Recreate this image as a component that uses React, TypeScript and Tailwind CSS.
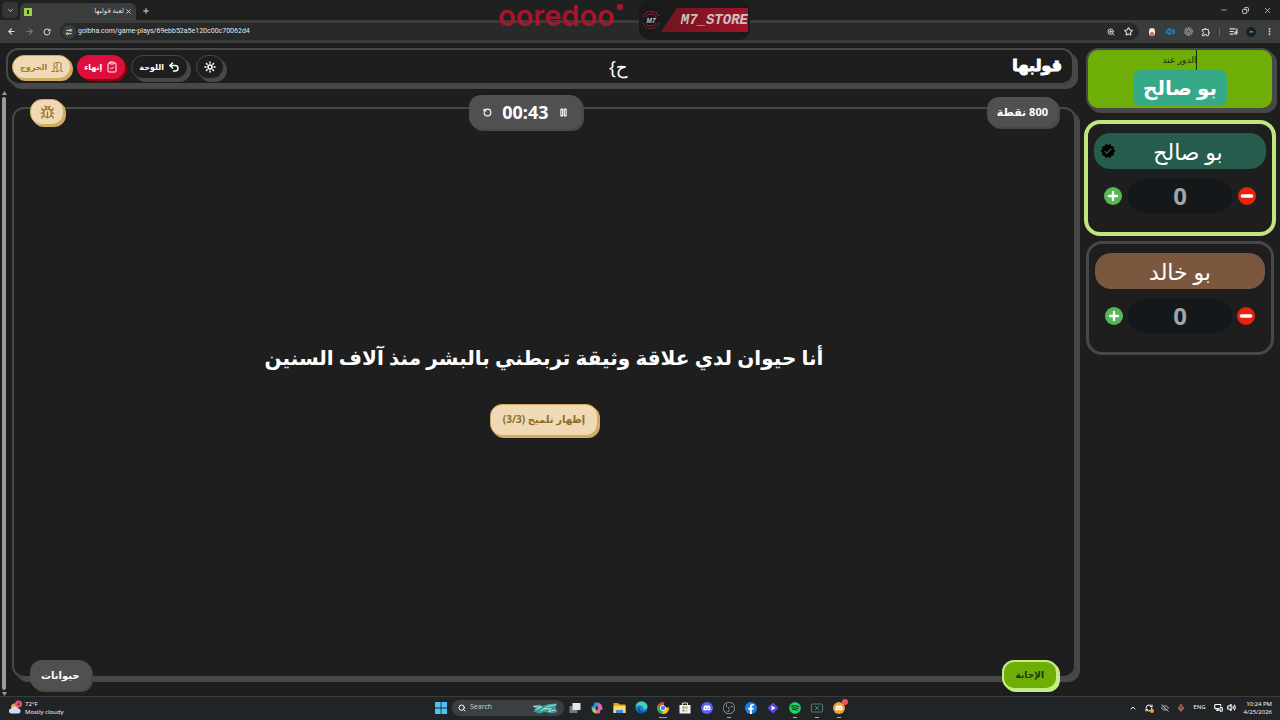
import type { ReactNode } from "react";
import {
  ArrowLeft,
  ArrowRight,
  Aperture,
  Bug,
  ChevronDown,
  ChevronUp,
  ClipboardCheck,
  Copy,
  EllipsisVertical,
  EyeOff,
  ListMusic,
  Mic,
  Minus,
  MonitorSmartphone,
  Pause,
  Plus,
  RefreshCw,
  RotateCcw,
  RotateCw,
  Search,
  Settings2,
  Star,
  Sun,
  Undo2,
  Volume2,
  X,
  ZoomIn,
} from "lucide-react";
import { FaDiscord, FaFacebookF, FaSpotify } from "react-icons/fa";
import { SiObsstudio } from "react-icons/si";
import { MdOutlineExtension, MdVerified } from "react-icons/md";

interface Team {
  name: string;
  score: number;
  active: boolean;
  color: string;
}

const TEAMS: Team[] = [
  { name: "بو صالح", score: 0, active: true, color: "bg-[#265c4d]" },
  { name: "بو خالد", score: 0, active: false, color: "bg-[#7b573f]" },
];

function IconButton({ label, className = "", children }: { label: string; className?: string; children: ReactNode }) {
  return (
    <button aria-label={label} className={`flex items-center justify-center shrink-0 ${className}`}>
      {children}
    </button>
  );
}

function DoorIcon() {
  return (
    <svg width="12" height="12" viewBox="0 0 24 24" fill="none" stroke="currentColor" strokeWidth="2" strokeLinecap="round" strokeLinejoin="round">
      <path d="M1 21h5M6 21V6a3 3 0 0 1 3-3h8a3 3 0 0 1 3 3v15h3M12 3v18l5-2M12 21h-2M9 12v1" />
    </svg>
  );
}

function BrowserChrome() {
  return (
    <header className="text-[#dcdcdc]">
      <div className="flex items-end h-5 bg-[#1f2121]">
        <IconButton label="Search tabs" className="w-4 h-4 ml-0.5 mb-0.5 rounded bg-[#343636]">
          <ChevronDown size={7} strokeWidth={3} />
        </IconButton>
        <div className="flex items-center w-29 h-[17px] ml-0.5 px-1 rounded-t-md bg-[#3b3c3c]">
          <span className="flex items-center justify-center w-2 h-2 bg-[#9bd43c]">
            <span className="w-0.5 h-1 bg-[#27400a]" />
          </span>
          <span dir="rtl" className="flex-1 pl-2 text-[7px] truncate">لعبة قولبها</span>
          <IconButton label="Close tab" className="w-2">
            <X size={7} strokeWidth={3} />
          </IconButton>
        </div>
        <IconButton label="New tab" className="w-4 h-[18px] ml-0.5">
          <Plus size={8} strokeWidth={3} />
        </IconButton>
        <div className="flex items-center gap-3.5 h-full ml-auto pr-2">
          <IconButton label="Minimize"><Minus size={8} /></IconButton>
          <IconButton label="Restore"><Copy size={7} strokeWidth={3} className="-scale-x-100" /></IconButton>
          <IconButton label="Close window"><X size={9} /></IconButton>
        </div>
      </div>
      <div className="flex items-center h-[23px] pl-1.5 pr-1.5 bg-[#3b3c3c]">
        <div className="flex items-center gap-2">
          <IconButton label="Back" className="w-2.5"><ArrowLeft size={9} strokeWidth={3} /></IconButton>
          <IconButton label="Forward" className="w-2.5 text-[#777]"><ArrowRight size={9} strokeWidth={3} /></IconButton>
          <IconButton label="Reload" className="w-2.5"><RotateCw size={8} strokeWidth={3} /></IconButton>
        </div>
        <div className="flex flex-1 items-center h-[17px] ml-2 pl-0.5 pr-1.5 rounded-full bg-[#282929]">
          <span className="flex items-center justify-center w-3.5 h-3.5 rounded-full bg-[#3b3c3c]">
            <Settings2 size={8} strokeWidth={3} className="-scale-x-100" />
          </span>
          <input
            aria-label="Address"
            className="flex-1 min-w-0 px-0.5 font-['Roboto'] text-[7px] text-[#e6e6e6] bg-transparent outline-none"
            defaultValue="golbha.com/game-plays/69ebb52a5e120c00c70062d4"
          />
          <div className="flex items-center gap-2">
            <IconButton label="Zoom" className="w-2"><ZoomIn size={8} strokeWidth={3} /></IconButton>
            <IconButton label="Bookmark" className="w-2.5"><Star size={9} strokeWidth={3} /></IconButton>
          </div>
        </div>
        <div className="flex items-center gap-2 ml-2">
          <IconButton label="Blocker" className="w-2.5">
            <span className="flex items-end justify-center w-1.5 h-2 rounded-sm bg-[#f3e5dc]">
              <span className="w-1 h-1 rounded-full bg-[#dc6a38]" />
            </span>
          </IconButton>
          <IconButton label="Sound" className="w-2.5 text-[#1c8fe6]"><Volume2 size={9} strokeWidth={3} /></IconButton>
          <IconButton label="Capture" className="w-2.5 text-[#aaa]"><Aperture size={9} /></IconButton>
          <IconButton label="Extensions" className="w-2.5">
            <MdOutlineExtension size={10} />
          </IconButton>
          <span className="w-px h-2 bg-[#666]" />
          <IconButton label="Media" className="w-2.5"><ListMusic size={9} strokeWidth={3} /></IconButton>
          <IconButton label="Profile" className="w-2.5 h-2.5 rounded-full bg-[#12202b] text-[4px]">m</IconButton>
          <IconButton label="Menu" className="w-2.5"><EllipsisVertical size={9} strokeWidth={3} /></IconButton>
        </div>
      </div>
    </header>
  );
}

function Sponsors() {
  return (
    <div className="absolute inset-x-0 top-0 flex justify-center gap-4 pr-8 pointer-events-none">
      <div className="flex gap-0.5 text-[#a9142b]">
        <span className="font-['Inter'] text-[29px] leading-8 font-semibold">ooredoo</span>
        <span className="w-1.5 h-1.5 mt-1 rounded-xs bg-[#a9142b]" />
      </div>
      <div className="flex items-center h-10 px-0.5 rounded-xl bg-[#191a1a]">
        <svg width="20" height="20" viewBox="0 0 40 40">
          <circle cx="20" cy="20" r="17" fill="#1c1113" stroke="#8f2434" strokeWidth="3" strokeDasharray="3 2" />
          <circle cx="20" cy="20" r="12" fill="none" stroke="#a52438" strokeWidth="2" />
          <rect x="2" y="14" width="36" height="12" fill="#191a1a" />
          <text x="20" y="25" textAnchor="middle" fill="#c4bcbc" fontSize="13" fontStyle="italic" fontWeight="700" fontFamily="Liberation Sans">M7</text>
        </svg>
        <span className="pl-5 text-sm leading-6 font-bold italic font-['Liberation_Mono'] text-[#c9c4c4] bg-linear-to-r from-[#6d1420] to-[#a31327] [clip-path:polygon(16px_0,100%_0,100%_100%,0_100%)]">
          M7_STORE
        </span>
      </div>
    </div>
  );
}

function TopBar() {
  return (
    <div className="flex items-center justify-between h-[37px] mx-1.5 px-1 border-2 border-[#484848] rounded-xl shadow-[4px_4px_0_#484848]">
      <div className="flex items-center gap-1.5 text-[8px] font-bold text-white">
        <button className="flex items-center gap-1 h-6 px-[7px] rounded-xl border border-[#d0ab62] bg-[#f0d9b5] text-[#a37a2c] shadow-[2px_2px_0_#d0ab62]">
          <span>الخروج</span>
          <DoorIcon />
        </button>
        <button className="flex items-center gap-1 h-6 px-[7px] rounded-xl bg-[#df0f3d] shadow-[2px_2px_0_#8d0008]">
          <span>إنهاء</span>
          <ClipboardCheck size={12} />
        </button>
        <button className="flex items-center gap-1 h-6 px-[7px] rounded-xl border border-[#484848] bg-[#1e1e1e] shadow-[3px_3px_0_#484848]">
          <span>اللوحة</span>
          <Undo2 size={12} strokeWidth={3} />
        </button>
        <IconButton label="الوضع" className="w-7 h-6 ml-0.5 rounded-xl border border-[#484848] bg-[#1e1e1e] shadow-[3px_3px_0_#484848]">
          <Sun size={12} strokeWidth={3} />
        </IconButton>
      </div>
      <span dir="rtl" className="text-lg text-white">ح{"}"}</span>
      <a href="#" className="pr-1.5 pb-1 text-base font-black text-white [-webkit-text-stroke:1px_white]">قولبها</a>
    </div>
  );
}

function Board() {
  return (
    <main className="relative flex flex-col flex-1 items-center justify-center mx-1 mt-[18px] mb-[18px] pb-2.5 border-2 border-[#484848] rounded-xl shadow-[4px_4px_0_#484848]">
      <div className="absolute inset-x-4 -top-3.5 flex items-center justify-between">
        <IconButton label="بلاغ" className="w-[34px] h-6.5 rounded-xl border border-[#d0ab62] bg-[#f0d9b5] text-[#9a7428] shadow-[2px_2px_0_#d0ab62]">
          <Bug size={15} />
        </IconButton>
        <div className="flex items-center gap-2.5 h-[34px] px-3.5 rounded-xl bg-[#505050] text-white shadow-[2px_2px_0_#484848]">
          <IconButton label="إعادة"><RotateCcw size={9} strokeWidth={3} /></IconButton>
          <span className="text-lg font-bold">00:43</span>
          <IconButton label="إيقاف"><Pause size={9} strokeWidth={3} /></IconButton>
        </div>
        <span dir="rtl" className="px-2.5 rounded-xl bg-[#505050] text-[11px] leading-[30px] font-bold text-white shadow-[2px_2px_0_#484848]">800 نقطة</span>
      </div>
      <h1 dir="rtl" className="text-xl leading-9 font-bold text-white">أنا حيوان لدي علاقة وثيقة تربطني بالبشر منذ آلاف السنين</h1>
      <button dir="rtl" className="h-8 mt-7 px-3 rounded-xl border border-[#d0ab62] bg-[#f0d9b5] text-[10px] font-bold text-[#8f6d25] shadow-[2px_2px_0_#d0ab62]">
        إظهار تلميح (3/3)
      </button>
      <div className="absolute inset-x-4 -bottom-3.5 flex items-center justify-between">
        <span className="px-[11px] rounded-xl bg-[#505050] text-[10px] leading-[30px] font-bold text-white shadow-[2px_2px_0_#484848]">حيوانات</span>
        <button className="h-[30px] px-3 rounded-xl border-2 border-[#c5ee86] bg-[#6fae06] text-[9px] font-bold text-[#17330c] shadow-[2px_2px_0_#c5ee86]">الإجابة</button>
      </div>
    </main>
  );
}

function TeamCard({ team }: { team: Team }) {
  return (
    <section
      className={
        team.active
          ? "px-1.5 pt-[9px] pb-[19px] rounded-2xl border-4 border-[#bfe57f]"
          : "mx-0.5 px-1.5 pt-[9px] pb-[19px] rounded-2xl border-3 border-[#484848]"
      }
    >
      <div className={`relative flex items-center justify-center h-9 rounded-2xl text-[22px] text-white ${team.color}`}>
        {team.active && <MdVerified size={16} className="absolute left-1.5 text-black" />}
        <span className={team.active ? "pl-4" : ""}>{team.name}</span>
      </div>
      <div className="flex items-center justify-between mt-2.5 px-2.5">
        <IconButton label="زيادة" className="w-[18px] h-[18px] rounded-full bg-[#57b656] text-white"><Plus size={14} strokeWidth={4} /></IconButton>
        <span className="flex items-center justify-center w-26 h-8.5 rounded-full bg-[#14181b] text-2xl font-bold text-[#a3a5a9]">{team.score}</span>
        <IconButton label="نقصان" className="w-[18px] h-[18px] rounded-full bg-[#e9210f] text-white"><Minus size={16} strokeWidth={5} /></IconButton>
      </div>
    </section>
  );
}

function Sidebar() {
  return (
    <aside className="flex flex-col gap-[5px] w-48 mr-1">
      <div className="flex flex-col items-center h-[62px] mx-0.5 mb-[5px] border-2 border-[#484848] rounded-xl bg-[#6fae06] shadow-[3px_3px_0_#484848]">
        <span className="text-[9px] leading-5 text-[#17330c] border-r border-[#17330c]">الدور عند</span>
        <span className="px-2.5 rounded-lg bg-[#36aa86] text-xl leading-9 font-bold text-white">بو صالح</span>
      </div>
      {TEAMS.map((team) => (
        <TeamCard key={team.name} team={team} />
      ))}
    </aside>
  );
}

function TaskIcon({ label, open, children }: { label: string; open?: boolean; children: ReactNode }) {
  return (
    <button aria-label={label} className="relative flex items-center justify-center w-[22px] h-full">
      {children}
      {open && <span className="absolute bottom-0 w-1 h-px bg-[#aaa]" />}
    </button>
  );
}

function Taskbar() {
  return (
    <footer className="grid grid-cols-[1fr_auto_1fr] items-center h-6 pb-0.5 border-t border-[#3a3c3c] bg-[#212426] font-['Open_Sans'] text-[6px] text-white">
      <div className="flex items-center gap-0.5 pl-2">
        <svg width="15" height="15" viewBox="0 0 30 30">
          <circle cx="13" cy="14" r="7" fill="#f0a04b" />
          <path d="M7 27a5 5 0 0 1 0-10 7 7 0 0 1 13 0 5 5 0 0 1 0 10z" fill="#cfdcf6" />
          <circle cx="21" cy="8" r="7" fill="#ee5a6c" />
          <text x="21" y="12" textAnchor="middle" fontSize="10" fill="#401018">4</text>
        </svg>
        <div className="leading-2">
          <p>72°F</p>
          <p>Mostly cloudy</p>
        </div>
      </div>
      <div className="flex items-center h-full">
        <TaskIcon label="Start">
          <svg width="12" height="12" viewBox="0 0 12 12" fill="#4cc3f5">
            <path d="M0 0h5.6v5.6H0zM6.4 0H12v5.6H6.4zM0 6.4h5.6V12H0zM6.4 6.4H12V12H6.4z" />
          </svg>
        </TaskIcon>
        <label className="flex items-center gap-1 w-28 h-4 px-1.5 rounded-full bg-[#3c3f41]">
          <Search size={8} strokeWidth={3} />
          <input aria-label="Search" placeholder="Search" className="w-12 flex-1 text-[7px] placeholder:text-[#d0d0d0] bg-transparent outline-none" />
          <svg width="26" height="12" viewBox="0 0 52 24">
            <path d="M1 7l14-2 6 3 12-4 17-1-3 9 4 8-12 3-13-3-12 3L3 19l4-6z" fill="#3c9a98" />
            <path d="M3 9l16 1-12 5M17 18l14-9 17-4M24 14l14-1-5 6 14-3" stroke="#a5e8df" strokeWidth="2" fill="none" />
          </svg>
        </label>
        <TaskIcon label="Task view">
          <svg width="12" height="12" viewBox="0 0 24 24">
            <path d="M1 8h16v14H1z" fill="#777" />
            <path d="M7 2h16v14H7z" fill="#e6e6e6" />
          </svg>
        </TaskIcon>
        <TaskIcon label="Copilot">
          <svg width="12" height="12" viewBox="0 0 24 24">
            <path d="M8 1h7q2 0 3 3l1 3h-5l-3 9-3 5H6q-2 0-3-3l-2-6q-1-4 3-4h1l1-4q0-3 2-3z" fill="#2f93e4" />
            <path d="M16 23H9q-2 0-3-3l-1-3h5l3-9 3-5h2q2 0 3 3l2 6q1 4-3 4h-1l-1 4q0 3-2 3z" fill="#df6aa2" />
            <path d="M1 13l6-1 3 5-2 4H6q-2 0-3-3z" fill="#8fcf5b" />
            <path d="M5 17h5l-1 5q-2 0-3-2z" fill="#f0bd3f" />
            <path d="M10 9h4l-1 7h-3z" fill="#212426" />
          </svg>
        </TaskIcon>
        <TaskIcon label="Files">
          <svg width="13" height="12" viewBox="0 0 26 24">
            <path d="M1 2h9l3 3h12v17H1z" fill="#e9a922" />
            <path d="M1 8h24v14H1z" fill="#fcd667" />
            <path d="M6 16h14v6H6z" fill="#3c8dd8" />
          </svg>
        </TaskIcon>
        <TaskIcon label="Edge">
          <svg width="13" height="13" viewBox="0 0 24 24">
            <circle cx="12" cy="12" r="11" fill="#1c7fd0" />
            <path d="M1 11C2 4 7 1 12 1c7 0 11 5 11 9 0 5-6 6-8 4 1-4-5-9-14-3z" fill="#45cfb4" />
            <path d="M9 11c-3 6 4 10 11 8-4 5-12 5-15-1-1-4 1-6 4-7z" fill="#10508f" />
          </svg>
        </TaskIcon>
        <TaskIcon label="Chrome">
          <svg width="14" height="14" viewBox="0 0 28 28">
            <circle cx="14" cy="14" r="12" fill="#e94435" />
            <path d="M14 14L3.600 8A12 12 0 0 0 14 26z" fill="#36a853" />
            <path d="M14 14h12A12 12 0 0 1 13 26z" fill="#fbc116" />
            <circle cx="14" cy="14" r="6" fill="#fff" />
            <circle cx="14" cy="14" r="4.500" fill="#4285f4" />
            <circle cx="22" cy="6" r="6" fill="#12202b" />
          </svg>
          <span className="absolute bottom-0 w-2 h-px bg-[#f08080]" />
        </TaskIcon>
        <TaskIcon label="Store">
          <svg width="12" height="12" viewBox="0 0 24 24">
            <path d="M7 6V2h10v4" fill="none" stroke="#ddd" strokeWidth="2" />
            <path d="M1 6h22v17H1z" fill="#f2f2f2" />
            <path d="M7 9h4v4H7z" fill="#e75b3c" />
            <path d="M13 9h4v4h-4z" fill="#71b64a" />
            <path d="M7 15h4v4H7z" fill="#3f9fe0" />
            <path d="M13 15h4v4h-4z" fill="#f1bc38" />
          </svg>
        </TaskIcon>
        <TaskIcon label="Discord">
          <span className="flex items-center justify-center w-3 h-3 rounded-full bg-[#5865f2]"><FaDiscord size={8} /></span>
        </TaskIcon>
        <TaskIcon label="OBS" open><SiObsstudio size={12} className="text-[#bbb]" /></TaskIcon>
        <TaskIcon label="Facebook">
          <span className="flex items-end justify-center w-3 h-3 rounded-full bg-[#1783ea]"><FaFacebookF size={10} /></span>
        </TaskIcon>
        <TaskIcon label="Clipchamp">
          <svg width="12" height="12" viewBox="0 0 24 24">
            <rect x="4" y="4" width="16" height="16" rx="2" transform="rotate(45 12 12)" fill="#5d42dc" />
            <path d="M9 7l8 5-8 5z" fill="#fff" />
          </svg>
        </TaskIcon>
        <TaskIcon label="Spotify" open><FaSpotify size={12} className="text-[#1ed760]" /></TaskIcon>
        <TaskIcon label="Excel" open>
          <svg width="12" height="10" viewBox="0 0 24 20" fill="none" stroke="#448467" strokeWidth="2">
            <rect x="1" y="2" width="22" height="16" rx="2" />
            <path d="M8 6l8 8M16 6l-8 8" />
          </svg>
        </TaskIcon>
        <TaskIcon label="Discord Canary" open>
          <span className="flex items-center justify-center w-3 h-3 rounded-full bg-[#e9a13b]"><FaDiscord size={8} /></span>
          <span className="absolute top-0.5 right-0.5 w-1.5 h-1.5 rounded-full bg-[#ee5361]" />
        </TaskIcon>
      </div>
      <div className="flex items-center justify-end gap-2 pr-2">
        <ChevronUp size={8} strokeWidth={3} />
        <span className="relative">
          <RefreshCw size={8} strokeWidth={3} />
          <span className="absolute -bottom-px -right-px w-1 h-1 rounded-full bg-[#f0a030]" />
        </span>
        <EyeOff size={8} strokeWidth={3} className="text-[#aaa]" />
        <Mic size={8} strokeWidth={3} className="text-[#d97a5c]" />
        <span>ENG</span>
        <span className="flex items-center gap-1">
          <MonitorSmartphone size={9} strokeWidth={3} />
          <Volume2 size={9} strokeWidth={3} />
        </span>
        <div className="leading-2 text-right">
          <p>10:24 PM</p>
          <p>4/25/2026</p>
        </div>
      </div>
    </footer>
  );
}

export default function App() {
  return (
    <div className="relative flex flex-col min-h-screen bg-[#1e1e1e] font-['Noto_Sans','DejaVu_Sans',sans-serif]">
      <BrowserChrome />
      <div className="flex flex-1 gap-1 pt-[5px]">
        <div className="flex flex-col flex-1 min-w-0">
          <TopBar />
          <div className="flex flex-1 pt-1">
            <div className="flex flex-col items-center w-2 pt-0.5 text-[#9b9b9b]">
              <svg width="5" height="4" viewBox="0 0 5 4" fill="currentColor"><path d="M2.500 0L5 4H0z" /></svg>
              <span className="flex-1 w-1 my-0.5 rounded-full bg-[#9b9b9b]" />
              <svg width="5" height="4" viewBox="0 0 5 4" fill="currentColor"><path d="M2.500 4L5 0H0z" /></svg>
            </div>
            <Board />
          </div>
        </div>
        <Sidebar />
      </div>
      <Taskbar />
      <Sponsors />
    </div>
  );
}
